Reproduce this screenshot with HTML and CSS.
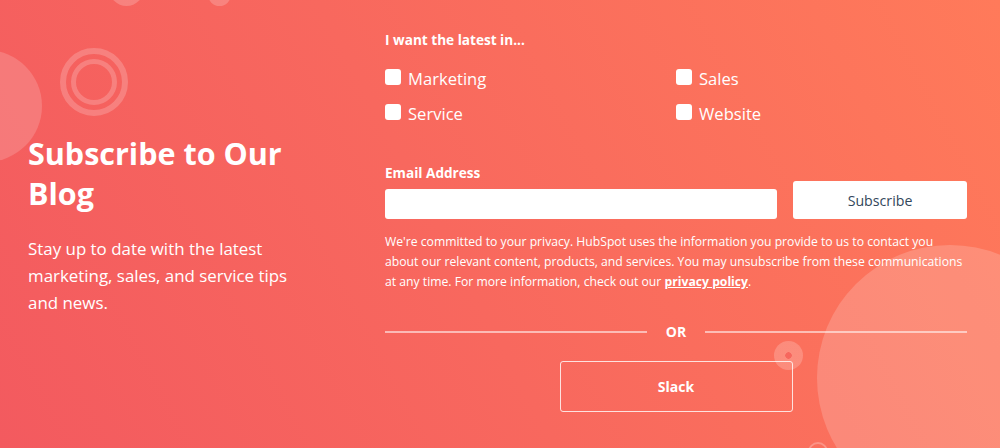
FILE: index.html
```html
<!DOCTYPE html>
<html lang="en">
<head>
<meta charset="utf-8">
<title>Subscribe to Our Blog</title>
<link rel="stylesheet" href="styles.css">
</head>
<body>
<section class="hero">
  <div class="deco deco-top1"></div>
  <div class="deco deco-top2"></div>
  <div class="deco deco-left"></div>
  <div class="deco deco-rings"></div>
  <div class="deco deco-big"></div>
  <div class="deco deco-dot"></div>
  <div class="deco deco-ring-bottom"></div>

  <div class="intro">
    <h1 class="title">Subscribe to Our Blog</h1>
    <p class="lead">Stay up to date with the latest marketing, sales, and service tips and news.</p>
  </div>

  <form class="form">
    <p class="label">I want the latest in...</p>
    <div class="choices">
      <label class="choice"><span class="box"></span>Marketing</label>
      <label class="choice"><span class="box"></span>Sales</label>
      <label class="choice"><span class="box"></span>Service</label>
      <label class="choice"><span class="box"></span>Website</label>
    </div>

    <p class="label label-email">Email Address</p>
    <div class="email-row">
      <div class="input"></div>
      <button type="button" class="btn-subscribe">Subscribe</button>
    </div>

    <p class="privacy">We're committed to your privacy. HubSpot uses the information you provide to us to contact you<br>about our relevant content, products, and services. You may unsubscribe from these communications<br>at any time. For more information, check out our <a class="link" href="#">privacy policy</a>.</p>

    <div class="divider"><span class="rule"></span><span class="or">OR</span><span class="rule"></span></div>

    <div class="slack-wrap">
      <button type="button" class="btn-slack">Slack</button>
    </div>
  </form>
</section>
</body>
</html>
```

FILE: styles.css
```css
* { box-sizing: border-box; }
html, body { margin: 0; padding: 0; }
body {
  width: 1000px;
  height: 448px;
  overflow: hidden;
  font-family: "Open Sans", "Noto Sans", sans-serif;
  color: #fff;
}
.hero {
  position: relative;
  width: 1000px;
  height: 448px;
  overflow: hidden;
  background: linear-gradient(62deg, #f35a5f 0%, #f8685e 45%, #ff7a5a 100%);
  display: flex;
  padding: 0 33px 0 28px;
}
.deco { position: absolute; border-radius: 50%; pointer-events: none; z-index: 0; }
.deco-top1 { left: 109px; top: -29px; width: 35px; height: 35px; background: rgba(255,255,255,0.2); }
.deco-top2 { left: 208px; top: -17px; width: 23px; height: 23px; background: rgba(255,255,255,0.2); }
.deco-left { left: -70px; top: 50px; width: 112px; height: 112px; background: rgba(255,255,255,0.17); }
.deco-rings {
  left: 60px; top: 48px; width: 68px; height: 68px;
  border: 6px solid rgba(255,255,255,0.2);
}
.deco-rings::after {
  content: ""; position: absolute; left: 5px; top: 5px; right: 5px; bottom: 5px;
  border-radius: 50%; border: 5px solid rgba(255,255,255,0.2);
}
.deco-big { left: 817px; top: 245px; width: 266px; height: 266px; background: rgba(255,255,255,0.18); }
.deco-dot {
  left: 774px; top: 341px; width: 29px; height: 29px;
  background: radial-gradient(circle, rgba(246,102,94,0.9) 0 3px, rgba(255,255,255,0.2) 3.5px);
}
.deco-ring-bottom { left: 808px; top: 442px; width: 20px; height: 20px; border: 2px solid rgba(255,255,255,0.25); }

.intro { position: relative; z-index: 1; width: 357px; padding-top: 133px; flex: none; }
.title { margin: 0; font-size: 30.5px; line-height: 40px; font-weight: 700; width: 300px; }
.lead { margin: 22px 0 0; font-size: 16.9px; line-height: 27px; width: 275px; }

.form { position: relative; z-index: 1; flex: 1; padding-top: 31px; }
.label { margin: 0; font-size: 13.6px; font-weight: 700; line-height: 18px; }
.choices {
  display: grid; grid-template-columns: 291px 1fr; row-gap: 16px; margin-top: 20px;
}
.choice { display: flex; align-items: center; font-size: 16.6px; line-height: 19px; }
.box { width: 16px; height: 16px; border-radius: 3px; background: #fff; margin-right: 7px; flex: none; position: relative; top: -2px; }
.label-email { margin-top: 41px; }
.email-row { display: flex; align-items: flex-end; gap: 16px; margin-top: -1px; }
.input { width: 392px; height: 30px; background: #fff; border-radius: 3px; }
.btn-subscribe {
  flex: 1; height: 38px; border: 0; border-radius: 3px; background: #fff;
  color: #33475b; font-family: inherit; font-size: 14.2px; padding: 0;
}
.privacy { margin: 13px -20px 0 0; font-size: 12.2px; line-height: 20px; white-space: nowrap; }
.link { color: #fff; font-weight: 700; text-decoration: underline; }
.divider { display: flex; align-items: center; margin-top: 31px; }
.rule { flex: 1; height: 2px; background: rgba(255,255,255,0.55); }
.or { width: 58px; text-align: center; font-size: 14px; font-weight: 700; line-height: 18px; }
.slack-wrap { display: flex; justify-content: center; margin-top: 20px; }
.btn-slack {
  width: 233px; height: 51px; border: 1px solid rgba(255,255,255,0.8); border-radius: 3px;
  background: transparent; color: #fff; font-family: inherit; font-size: 14px; font-weight: 700;
}
```
